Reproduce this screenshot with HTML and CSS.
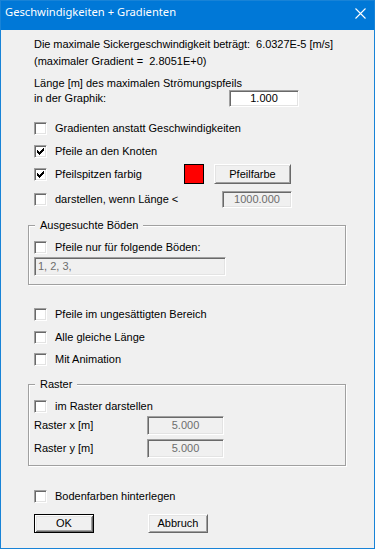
FILE: index.html
```html
<!DOCTYPE html>
<html lang="de">
<head>
<meta charset="utf-8">
<title>Geschwindigkeiten + Gradienten</title>
<link rel="stylesheet" href="styles.css">
</head>
<body>
<div class="window">
  <div class="titlebar">
    <span class="title">Geschwindigkeiten + Gradienten</span>
    <svg class="close" width="11" height="11" viewBox="0 0 11 11"><path d="M0.5 0.5 L10.5 10.5 M10.5 0.5 L0.5 10.5" stroke="#fff" stroke-width="1.1" fill="none"/></svg>
  </div>
  <div class="content">
    <div class="txt l1">Die maximale Sickergeschwindigkeit beträgt:&nbsp; 6.0327E-5 [m/s]</div>
    <div class="txt l2">(maximaler Gradient =&nbsp; 2.8051E+0)</div>
    <div class="txt l3">Länge [m] des maximalen Strömungspfeils</div>
    <div class="row r-len"><span class="lab-len">in der Graphik:</span><span class="edit e-len">1.000</span></div>

    <div class="row cbrow r1"><span class="box"></span><span class="cblab">Gradienten anstatt Geschwindigkeiten</span></div>
    <div class="row cbrow r2"><span class="box"><svg class="tick" width="7" height="7" viewBox="0 0 7 7"><path d="M0 2h1v1h1v1h1v-1h1v-1h1v-1h1v-1h1v3h-1v1h-1v1h-1v1h-1v1h-1v-1h-1v-1h-1z" fill="#000"/></svg></span><span class="cblab">Pfeile an den Knoten</span></div>
    <div class="row cbrow r3"><span class="box"><svg class="tick" width="7" height="7" viewBox="0 0 7 7"><path d="M0 2h1v1h1v1h1v-1h1v-1h1v-1h1v-1h1v3h-1v1h-1v1h-1v1h-1v1h-1v-1h-1v-1h-1z" fill="#000"/></svg></span><span class="cblab lab-farbig">Pfeilspitzen farbig</span><span class="swatch"></span><span class="btn b-farbe">Pfeilfarbe</span></div>
    <div class="row cbrow r4"><span class="box"></span><span class="cblab lab-laenge">darstellen, wenn Länge &lt;</span><span class="edit dis e-laenge">1000.000</span></div>

    <fieldset class="grp g1">
      <legend class="legend">Ausgesuchte Böden</legend>
      <div class="row cbrow"><span class="box"></span><span class="cblab">Pfeile nur für folgende Böden:</span></div>
      <div class="edit dis e-boeden">1, 2, 3,</div>
    </fieldset>

    <div class="row cbrow r5"><span class="box"></span><span class="cblab">Pfeile im ungesättigten Bereich</span></div>
    <div class="row cbrow r6"><span class="box"></span><span class="cblab">Alle gleiche Länge</span></div>
    <div class="row cbrow r7"><span class="box"></span><span class="cblab">Mit Animation</span></div>

    <fieldset class="grp g2">
      <legend class="legend">Raster</legend>
      <div class="row cbrow"><span class="box"></span><span class="cblab">im Raster darstellen</span></div>
      <div class="row r-rx"><span class="lab-r">Raster x [m]</span><span class="edit dis e-r">5.000</span></div>
      <div class="row r-ry"><span class="lab-r">Raster y [m]</span><span class="edit dis e-r">5.000</span></div>
    </fieldset>

    <div class="row cbrow r8"><span class="box"></span><span class="cblab">Bodenfarben hinterlegen</span></div>

    <div class="row buttons"><span class="btn default b-ok">OK</span><span class="btn b-abbruch">Abbruch</span></div>
  </div>
</div>
</body>
</html>
```
FILE: styles.css
```css
html, body {
  margin: 0;
  padding: 0;
  background: #ffffff;
}
body {
  font-family: "Liberation Sans", Arial, sans-serif;
  font-size: 11px;
  line-height: 13px;
  color: #000;
}
.window {
  width: 375px;
  height: 549px;
  box-sizing: border-box;
  border: 1px solid #1883d7;
  background: #f0f0f0;
  display: flex;
  flex-direction: column;
}
.titlebar {
  height: 29px;
  flex: none;
  background: #0078d7;
  color: #fff;
  display: flex;
  align-items: flex-start;
  justify-content: space-between;
  padding: 0 8px 0 4px;
  box-sizing: border-box;
  font-family: "Noto Sans", "Open Sans", sans-serif;
  font-size: 11.2px;
  line-height: 16px;
}
.title {
  margin-top: 3px;
  white-space: nowrap;
}
.close {
  margin-top: 7px;
  display: block;
}
.content {
  padding-left: 33px;
  display: flex;
  flex-direction: column;
  align-items: flex-start;
}
.txt {
  white-space: nowrap;
  height: 13px;
}
.l1 { margin-top: 8px; letter-spacing: -0.05px; }
.l2 { margin-top: 4px; }
.l3 { margin-top: 9px; }
.row {
  display: flex;
  align-items: center;
  white-space: nowrap;
}
.r-len { height: 17px; }
.lab-len { width: 195px; }
.e-len { width: 70px; height: 17px; }

.box {
  width: 13px;
  height: 13px;
  box-sizing: border-box;
  border: 1px solid;
  border-color: #a0a0a0 #ffffff #ffffff #a0a0a0;
  box-shadow: inset 1px 1px 0 #696969, inset -1px -1px 0 #e3e3e3;
  background: #ffffff;
  flex: none;
  display: flex;
  align-items: center;
  justify-content: center;
}
.tick { display: block; }
.cblab { margin-left: 8px; }
.cbrow { min-height: 13px; }

.r1 { margin-top: 15px; }
.r2 { margin-top: 10px; }
.r3 { margin-top: 6px; height: 20px; }
.r4 { margin-top: 7px; height: 17px; }
.lab-farbig { width: 129px; }
.lab-laenge { width: 167px; }

.swatch {
  width: 20px;
  height: 20px;
  box-sizing: border-box;
  border: 1px solid #000;
  background: #ff0000;
  flex: none;
}
.b-farbe { margin-left: 10px; width: 77px; height: 20px; }
.e-laenge { width: 70px; height: 17px; }

.edit {
  display: flex;
  align-items: center;
  justify-content: center;
  box-sizing: border-box;
  border: 1px solid;
  border-color: #a0a0a0 #ffffff #ffffff #a0a0a0;
  box-shadow: inset 1px 1px 0 #696969, inset -1px -1px 0 #e3e3e3;
  background: #ffffff;
  color: #000;
  flex: none;
}
.edit.dis {
  background: #f0f0f0;
  color: #6d6d6d;
}

.btn {
  display: flex;
  align-items: center;
  justify-content: center;
  box-sizing: border-box;
  border: 1px solid;
  border-color: #ffffff #696969 #696969 #ffffff;
  box-shadow: inset 1px 1px 0 #e3e3e3, inset -1px -1px 0 #a0a0a0;
  background: #f0f0f0;
  flex: none;
}
.btn.default {
  border-color: #000;
  box-shadow: inset 1px 1px 0 #ffffff, inset -1px -1px 0 #696969, inset 2px 2px 0 #e3e3e3, inset -2px -2px 0 #a0a0a0;
}

.grp {
  margin: 0 0 0 -6px;
  width: 318px;
  box-sizing: border-box;
  border: 1px solid #a0a0a0;
  box-shadow: inset 1px 1px 0 #ffffff, 1px 1px 0 #ffffff;
  padding: 9px 0 8px 5px;
  display: flex;
  flex-direction: column;
  align-items: flex-start;
  min-width: 0;
}
.legend {
  margin-left: 1px;
  padding: 0 5px;
  background: #f0f0f0;
  line-height: 13px;
}
.g1 { margin-top: 11px; }
.e-boeden {
  margin-top: 3px;
  width: 192px;
  height: 19px;
  justify-content: flex-start;
  padding-left: 3px;
}
.r5 { margin-top: 23px; }
.r6 { margin-top: 10px; }
.r7 { margin-top: 9px; }
.g2 { margin-top: 12px; padding-bottom: 7px; }
.r-rx { margin-top: 3px; }
.r-ry { margin-top: 4px; }
.lab-r { width: 113px; }
.e-r { width: 77px; height: 19px; }
.r8 { margin-top: 24px; }
.buttons { margin-top: 11px; }
.b-ok { width: 60px; height: 19px; }
.b-abbruch { width: 60px; height: 19px; margin-left: 54px; }
```
